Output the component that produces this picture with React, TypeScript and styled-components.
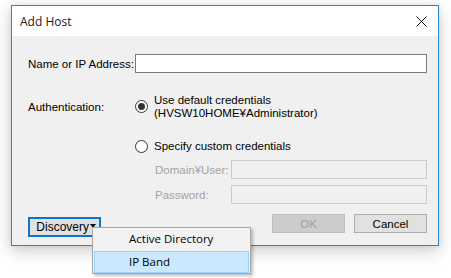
import React from "react";
import styled, { createGlobalStyle } from "styled-components";

const GlobalStyle = createGlobalStyle`
  html, body {
    margin: 0;
    padding: 0;
    background: #ffffff;
  }
  body {
    width: 451px;
    height: 278px;
    overflow: hidden;
    font-family: "Liberation Sans", Arial, sans-serif;
  }
`;

const Page = styled.div`
  position: relative;
  width: 451px;
  height: 278px;
  padding: 5px 0 0 11px;
  box-sizing: border-box;
`;

const Dialog = styled.div`
  width: 428px;
  height: 241px;
  box-sizing: border-box;
  border: 1px solid #2b86d4;
  background: #f0f0f0;
  box-shadow: 0 5px 16px rgba(0, 0, 0, 0.2), 0 0 6px rgba(0, 0, 0, 0.08);
  display: flex;
  flex-direction: column;
`;

const TitleBar = styled.div`
  height: 30px;
  background: #ffffff;
  display: flex;
  align-items: center;
  justify-content: space-between;
  padding: 0 8px 0 8px;
  font-family: "Open Sans", "Noto Sans", sans-serif;
  font-size: 12px;
  color: #1a1a1a;
`;

const CloseIcon = styled.svg`
  width: 11px;
  height: 11px;
  margin-right: 3px;
`;

const Body = styled.div`
  flex: 1;
  display: flex;
  flex-direction: column;
  padding: 18px 11px 0 16px;
  font-size: 11.5px;
  color: #000;
`;

const Row = styled.div<{ $top?: number; $h?: number }>`
  display: flex;
  align-items: center;
  margin-top: ${(p) => p.$top ?? 0}px;
  height: ${(p) => (p.$h ? `${p.$h}px` : "auto")};
`;

const Label = styled.div<{ $w: number; $disabled?: boolean }>`
  width: ${(p) => p.$w}px;
  flex: none;
  white-space: nowrap;
  color: ${(p) => (p.$disabled ? "#a3a3a3" : "#000")};
`;

const TextBox = styled.div<{ $disabled?: boolean }>`
  flex: 1;
  height: 19px;
  box-sizing: border-box;
  border: 1px solid ${(p) => (p.$disabled ? "#cccccc" : "#7a7a7a")};
  background: ${(p) => (p.$disabled ? "#f0f0f0" : "#ffffff")};
`;

const RadioOption = styled.div`
  display: flex;
  align-items: center;
  gap: 6px;
`;

const RadioCircle = styled.div<{ $checked?: boolean }>`
  width: 13px;
  height: 13px;
  box-sizing: border-box;
  border-radius: 50%;
  border: 1px solid #333;
  background: #fff;
  display: flex;
  align-items: center;
  justify-content: center;
  &::after {
    content: "";
    display: ${(p) => (p.$checked ? "block" : "none")};
    width: 7px;
    height: 7px;
    border-radius: 50%;
    background: #333;
  }
`;

const RadioText = styled.div`
  line-height: 12.5px;
  white-space: nowrap;
`;

const Indent = styled.div`
  display: flex;
  align-items: center;
  flex: 1;
  margin-left: 127px;
`;

const Footer = styled.div`
  display: flex;
  align-items: flex-start;
  margin-top: 10px;
`;

const Button = styled.div<{ $disabled?: boolean; $focused?: boolean }>`
  width: 73px;
  height: 19px;
  box-sizing: border-box;
  display: flex;
  align-items: center;
  justify-content: center;
  background: ${(p) => (p.$disabled ? "#cccccc" : "#e1e1e1")};
  border: ${(p) =>
    p.$focused ? "2px solid #0d74cf" : p.$disabled ? "1px solid #bfbfbf" : "1px solid #adadad"};
  color: ${(p) => (p.$disabled ? "#a0a0a0" : "#000")};
  font-size: 11.5px;
  white-space: nowrap;
`;

const DropButton = styled(Button)`
  margin-top: 3px;
  height: 20px;
  gap: 1px;
  justify-content: flex-end;
  padding-right: 3px;
  font-size: 12px;
`;

const Spacer = styled.div`
  flex: 1;
`;

const ButtonGroup = styled.div`
  display: flex;
  gap: 9px;
`;

const Caret = styled.span`
  width: 0;
  height: 0;
  border-left: 3.5px solid transparent;
  border-right: 3.5px solid transparent;
  border-top: 4px solid #000;
  margin-top: -2px;
`;

const Menu = styled.div`
  position: absolute;
  left: 92px;
  top: 227px;
  width: 159px;
  box-sizing: border-box;
  border: 1px solid #a8a8a8;
  background: #f2f2f2;
  box-shadow: 2px 2px 3px rgba(0, 0, 0, 0.25);
  padding: 0 1px;
  font-family: "Open Sans", "Noto Sans", sans-serif;
  font-size: 11.5px;
  color: #000;
`;

const MenuItem = styled.div<{ $active?: boolean }>`
  height: 22px;
  box-sizing: border-box;
  display: flex;
  align-items: center;
  padding-left: 34px;
  padding-bottom: 1px;
  border: 1px solid ${(p) => (p.$active ? "#99d1ff" : "transparent")};
  background: ${(p) => (p.$active ? "#cce8ff" : "transparent")};
  & + & {
    margin-top: 1px;
  }
`;

export default function App() {
  return (
    <>
      <GlobalStyle />
      <Page>
        <Dialog>
          <TitleBar>
            <span>Add Host</span>
            <CloseIcon viewBox="0 0 11 11">
              <path d="M0.5 0.5 L10.5 10.5 M10.5 0.5 L0.5 10.5" stroke="#111" strokeWidth="1" />
            </CloseIcon>
          </TitleBar>
          <Body>
            <Row $h={19}>
              <Label $w={107}>Name or IP Address:</Label>
              <TextBox />
            </Row>
            <Row $top={21}>
              <Label $w={107}>Authentication:</Label>
              <RadioOption>
                <RadioCircle $checked />
                <RadioText>
                  Use default credentials
                  <br />
                  (HVSW10HOME¥Administrator)
                </RadioText>
              </RadioOption>
            </Row>
            <Row $top={21} $h={13}>
              <Label $w={107} />
              <RadioOption>
                <RadioCircle />
                <RadioText>Specify custom credentials</RadioText>
              </RadioOption>
            </Row>
            <Row $top={7} $h={19}>
              <Indent>
                <Label $w={76} $disabled>
                  Domain¥User:
                </Label>
                <TextBox $disabled />
              </Indent>
            </Row>
            <Row $top={6} $h={19}>
              <Indent>
                <Label $w={76} $disabled>
                  Password:
                </Label>
                <TextBox $disabled />
              </Indent>
            </Row>
            <Footer>
              <DropButton $focused>
                Discovery
                <Caret />
              </DropButton>
              <Spacer />
              <ButtonGroup>
                <Button $disabled>OK</Button>
                <Button>Cancel</Button>
              </ButtonGroup>
            </Footer>
          </Body>
        </Dialog>
        <Menu>
          <MenuItem>Active Directory</MenuItem>
          <MenuItem $active>IP Band</MenuItem>
        </Menu>
      </Page>
    </>
  );
}
